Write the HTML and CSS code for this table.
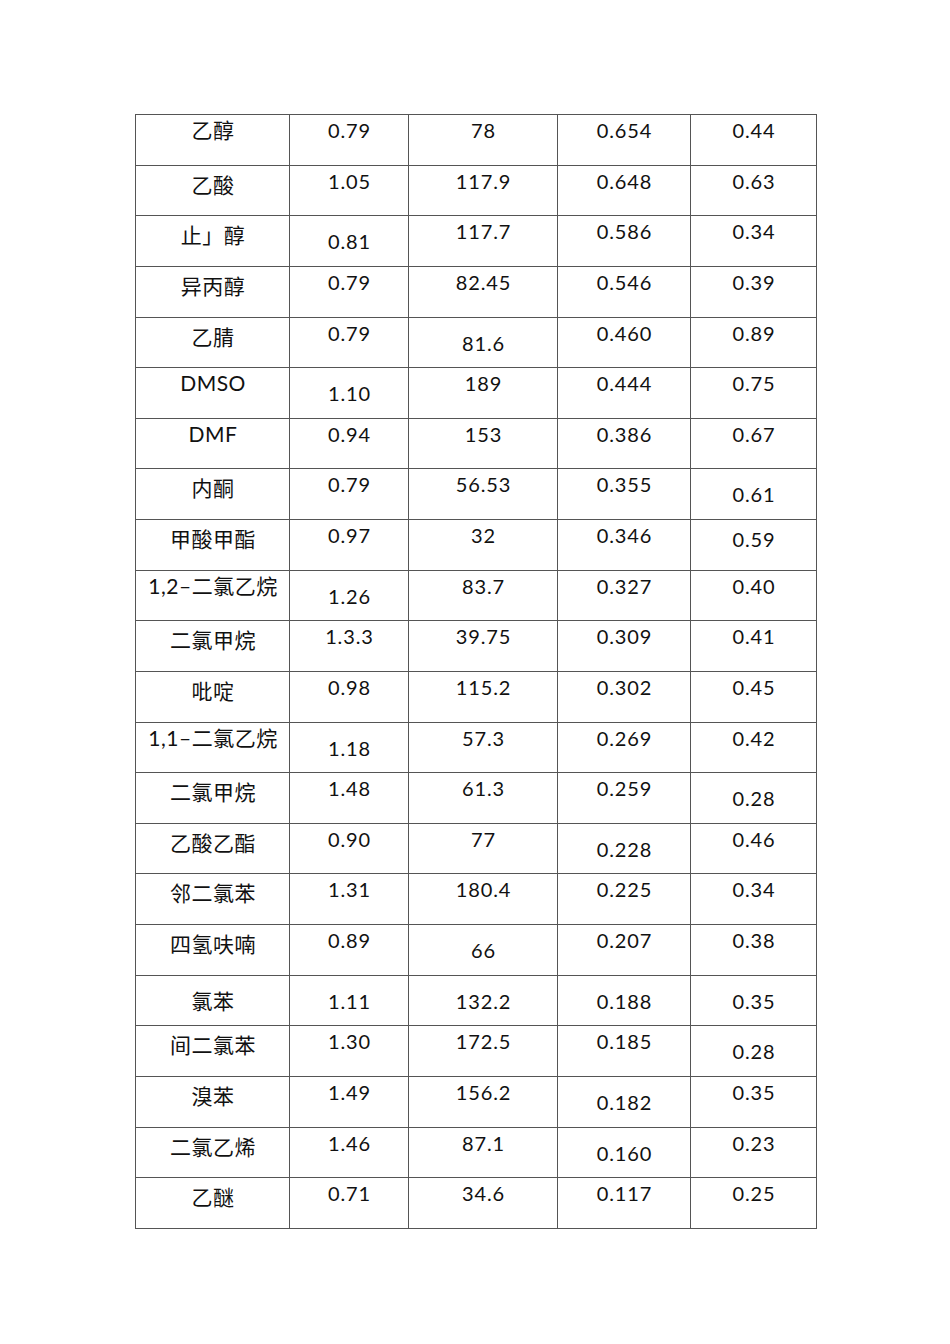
FILE: index.html
```html
<!DOCTYPE html>
<html lang="zh">
<head>
<meta charset="utf-8">
<title>溶剂表</title>
<link rel="stylesheet" href="styles.css">
</head>
<body>
<div class="page">
<table class="grid">
<colgroup><col class="c1"><col class="c2"><col class="c3"><col class="c4"><col class="c5"></colgroup>
<tbody>
<tr><td class="name t">乙醇</td><td>0.79</td><td>78</td><td>0.654</td><td>0.44</td></tr>
<tr><td class="name">乙酸</td><td>1.05</td><td>117.9</td><td>0.648</td><td>0.63</td></tr>
<tr><td class="name">止」醇</td><td class="l">0.81</td><td>117.7</td><td>0.586</td><td>0.34</td></tr>
<tr><td class="name">异丙醇</td><td>0.79</td><td>82.45</td><td>0.546</td><td>0.39</td></tr>
<tr><td class="name">乙腈</td><td>0.79</td><td class="l">81.6</td><td>0.460</td><td>0.89</td></tr>
<tr><td class="name t">DMSO</td><td class="l">1.10</td><td>189</td><td>0.444</td><td>0.75</td></tr>
<tr><td class="name t">DMF</td><td>0.94</td><td>153</td><td>0.386</td><td>0.67</td></tr>
<tr><td class="name">内酮</td><td>0.79</td><td>56.53</td><td>0.355</td><td class="l">0.61</td></tr>
<tr><td class="name">甲酸甲酯</td><td>0.97</td><td>32</td><td>0.346</td><td class="m">0.59</td></tr>
<tr><td class="name t">1,2–二氯乙烷</td><td class="l">1.26</td><td>83.7</td><td>0.327</td><td>0.40</td></tr>
<tr><td class="name">二氯甲烷</td><td>1.3.3</td><td>39.75</td><td>0.309</td><td>0.41</td></tr>
<tr><td class="name">吡啶</td><td>0.98</td><td>115.2</td><td>0.302</td><td>0.45</td></tr>
<tr><td class="name t">1,1–二氯乙烷</td><td class="l">1.18</td><td>57.3</td><td>0.269</td><td>0.42</td></tr>
<tr><td class="name">二氯甲烷</td><td>1.48</td><td>61.3</td><td>0.259</td><td class="l">0.28</td></tr>
<tr><td class="name">乙酸乙酯</td><td>0.90</td><td>77</td><td class="l">0.228</td><td>0.46</td></tr>
<tr><td class="name">邻二氯苯</td><td>1.31</td><td>180.4</td><td>0.225</td><td>0.34</td></tr>
<tr><td class="name">四氢呋喃</td><td>0.89</td><td class="l">66</td><td>0.207</td><td>0.38</td></tr>
<tr><td class="name l">氯苯</td><td class="l">1.11</td><td class="l">132.2</td><td class="l">0.188</td><td class="l">0.35</td></tr>
<tr><td class="name">间二氯苯</td><td>1.30</td><td>172.5</td><td>0.185</td><td class="l">0.28</td></tr>
<tr><td class="name">溴苯</td><td>1.49</td><td>156.2</td><td class="l">0.182</td><td>0.35</td></tr>
<tr><td class="name">二氯乙烯</td><td>1.46</td><td>87.1</td><td class="l">0.160</td><td>0.23</td></tr>
<tr><td class="name">乙醚</td><td>0.71</td><td>34.6</td><td>0.117</td><td>0.25</td></tr>
</tbody>
</table>
</div>
</body>
</html>
```

FILE: styles.css
```css
html, body {
  margin: 0;
  padding: 0;
  background: #ffffff;
}
.page {
  padding: 114px 0 0 135px;
}
.grid {
  border-collapse: collapse;
  table-layout: fixed;
  width: 681px;
  border: 1px solid #9a9a9a;
  font-family: "Lato", "Noto Sans CJK SC", sans-serif;
  color: #111;
}
.c1 { width: 154px; }
.c2 { width: 119px; }
.c3 { width: 149px; }
.c4 { width: 133px; }
.c5 { width: 126px; }
.grid tr {
  height: 50.64px;
}
.grid td {
  border: 1px solid #555;
  padding: 3px 0 0 1px;
  vertical-align: top;
  text-align: center;
  font-size: 20px;
  line-height: 24px;
  letter-spacing: 0.9px;
  white-space: nowrap;
  overflow: hidden;
}
.grid td.name {
  font-size: 21px;
  letter-spacing: 0.5px;
  padding-top: 7px;
}
.grid td.name.t {
  padding-top: 3px;
}
.grid td.name.l {
  padding-top: 13px;
}
.grid td.m {
  padding-top: 7px;
}
.grid td.l {
  padding-top: 13px;
}
```
